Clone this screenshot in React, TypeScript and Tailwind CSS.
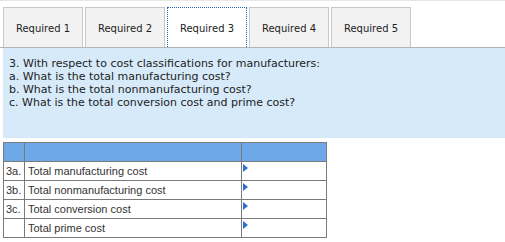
import React from "react";

const tabs = ["Required 1", "Required 2", "Required 3", "Required 4", "Required 5"];
const rows: [string, string][] = [
  ["3a.", "Total manufacturing cost"],
  ["3b.", "Total nonmanufacturing cost"],
  ["3c.", "Total conversion cost"],
  ["", "Total prime cost"],
];

export default function App() {
  return (
    <div className="w-[505px] h-[242px] bg-white overflow-hidden">
      <div className="h-px bg-[#e6e6e6]" />
      <div className="flex gap-[2px] pl-[3px] pt-[6px] border-b border-[#b4b4b4]">
        {tabs.map((t, i) =>
          i === 2 ? (
            <div
              key={t}
              className="w-[80px] h-[40px] pt-[2px] flex items-center justify-center bg-white border border-b-0 border-dotted border-[#2a5db0] text-[10px] text-[#222] font-['DejaVu_Sans',sans-serif]"
            >
              {t}
            </div>
          ) : (
            <div
              key={t}
              className="w-[80px] h-[40px] pt-[2px] flex items-center justify-center bg-[#f2f2f2] border border-b-0 border-[#c8c8c8] text-[10px] text-[#222] font-['DejaVu_Sans',sans-serif]"
            >
              {t}
            </div>
          )
        )}
      </div>
      <div className="ml-[3px] h-[90px] bg-[#d6eaf9] pl-[6px] pt-[9px] text-[11px] leading-[13px] text-[#222] font-['DejaVu_Sans',sans-serif]">
        <div>3. With respect to cost classifications for manufacturers:</div>
        <div>a. What is the total manufacturing cost?</div>
        <div>b. What is the total nonmanufacturing cost?</div>
        <div>c. What is the total conversion cost and prime cost?</div>
      </div>
      <table className="mt-[4px] ml-[3px] border-collapse text-[11px] text-[#333] font-['Liberation_Sans',Arial,sans-serif]">
        <tbody>
          <tr className="bg-[#6fa8e9]">
            <td className="w-[21px] h-[19px] p-0 border border-[#7a7a7a]" />
            <td className="w-[217px] h-[19px] p-0 border border-[#7a7a7a]" />
            <td className="w-[85px] h-[19px] p-0 border border-[#7a7a7a]" />
          </tr>
          {rows.map(([a, b]) => (
            <tr key={b}>
              <td className="h-[19px] border border-[#7a7a7a] py-0 px-[2px] leading-[18px]">{a}</td>
              <td className="h-[19px] border border-[#7a7a7a] py-0 px-[3px] leading-[18px]">{b}</td>
              <td className="h-[19px] border border-[#7a7a7a] p-0 align-top">
                <div className="w-0 h-0 mt-[2px] ml-[1px] border-t-[4px] border-b-[4px] border-l-[5px] border-t-transparent border-b-transparent border-l-[#2f6fd0]" />
              </td>
            </tr>
          ))}
        </tbody>
      </table>
    </div>
  );
}
